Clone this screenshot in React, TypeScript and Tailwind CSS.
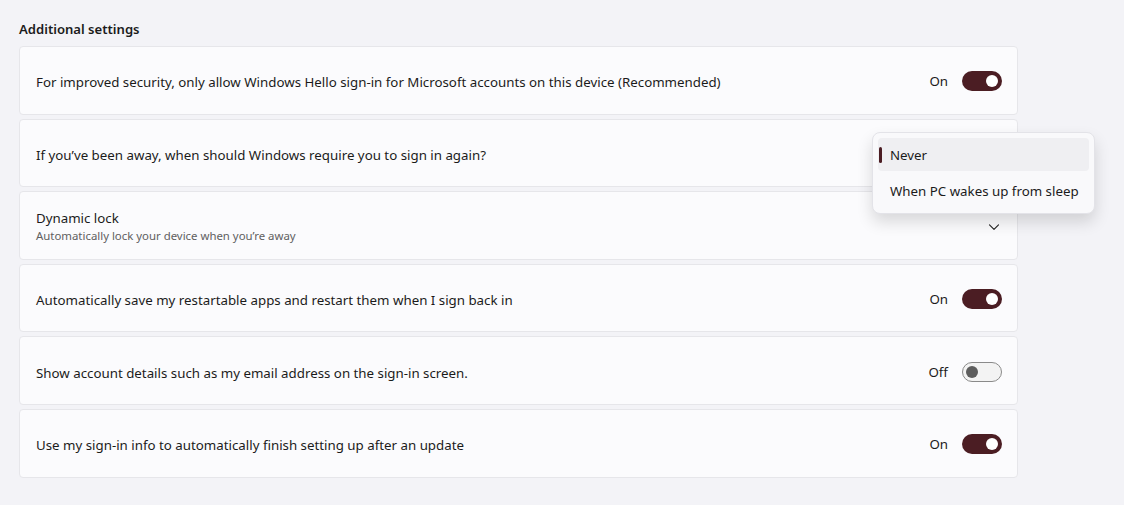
import React from "react";

const font = { fontFamily: '"Segoe UI", "Noto Sans", "Liberation Sans", sans-serif' };

function Toggle({ on }: { on: boolean }) {
  if (on) {
    return (
      <div className="w-[40px] h-[20px] rounded-full bg-[#4b1d23] flex items-center justify-end pr-[4px]">
        <div className="w-[12px] h-[12px] rounded-full bg-white" />
      </div>
    );
  }
  return (
    <div className="w-[40px] h-[20px] rounded-full bg-[#f3f3f3] border border-[#8a8a8a] flex items-center pl-[3px]">
      <div className="w-[12px] h-[12px] rounded-full bg-[#5d5d5d]" />
    </div>
  );
}

function Card({ children }: { children: React.ReactNode }) {
  return (
    <div className="h-[68.6px] rounded-[4px] bg-[#fbfbfd] border border-[#e6e6ea] flex items-center pl-[16px] pr-[15px]">
      {children}
    </div>
  );
}

function ToggleRow({ label, on }: { label: string; on: boolean }) {
  return (
    <Card>
      <div className="flex-1 text-[13.3px] text-[#1b1b1b] pt-[6px]">{label}</div>
      <div className="flex items-center gap-[14px] pt-[2px]">
        <span className="text-[13.3px] text-[#1b1b1b] pt-[2px]">{on ? "On" : "Off"}</span>
        <Toggle on={on} />
      </div>
    </Card>
  );
}

export default function App() {
  return (
    <div className="w-[1124px] h-[505px] bg-[#f3f3f7] pl-[19px] pt-[19px]" style={font}>
      <div className="w-[999px]">
        <div className="text-[13.1px] font-semibold text-[#1b1b1b] h-[21px] leading-[21px] mb-[6px]">Additional settings</div>
        <div className="relative flex flex-col gap-[4px]">
          <ToggleRow
            label="For improved security, only allow Windows Hello sign-in for Microsoft accounts on this device (Recommended)"
            on={true}
          />
          <Card>
            <div className="flex-1 text-[13.3px] text-[#1b1b1b] pt-[6px]">If you’ve been away, when should Windows require you to sign in again?</div>
          </Card>
          <Card>
            <div className="flex-1 flex flex-col pt-[3px]">
              <span className="text-[13.3px] text-[#1b1b1b] leading-[19px]">Dynamic lock</span>
              <span className="text-[11.4px] text-[#606060] leading-[16px]">Automatically lock your device when you’re away</span>
            </div>
            <svg width="12" height="12" viewBox="0 0 12 12" className="mr-[2px] mt-[4px]">
              <path d="M1.5 3.8 L6 8.3 L10.5 3.8" fill="none" stroke="#222" strokeWidth="1.1" strokeLinecap="round" strokeLinejoin="round" />
            </svg>
          </Card>
          <ToggleRow label="Automatically save my restartable apps and restart them when I sign back in" on={true} />
          <ToggleRow label="Show account details such as my email address on the sign-in screen." on={false} />
          <ToggleRow label="Use my sign-in info to automatically finish setting up after an update" on={true} />

          <div className="absolute left-[853px] top-[86px] w-[223px] h-[82px] rounded-[8px] bg-[#f9f9fb] border border-[#e3e3e8] shadow-[0_8px_16px_rgba(0,0,0,0.14)] p-[5px] flex flex-col">
            <div className="relative h-[33px] shrink-0 rounded-[4px] bg-[#efeff2] flex items-center pl-[12px] pt-[2px] text-[13.3px] text-[#1b1b1b]">
              <div className="absolute left-[1px] top-[9px] w-[3px] h-[16px] rounded-full bg-[#4b1d23]" />
              Never
            </div>
            <div className="h-[38px] flex items-center pl-[12px] pt-[4px] text-[13.3px] text-[#1b1b1b]">When PC wakes up from sleep</div>
          </div>
        </div>
      </div>
    </div>
  );
}
